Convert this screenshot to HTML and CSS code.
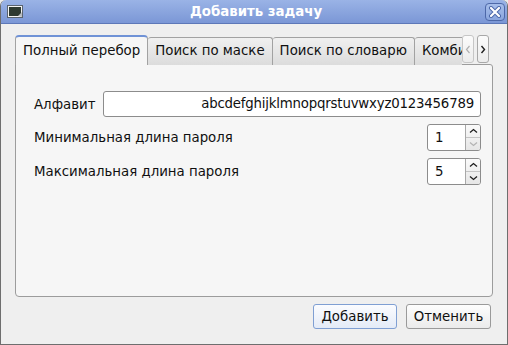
FILE: index.html
```html
<!DOCTYPE html>
<html lang="ru">
<head>
    <meta charset="UTF-8">
    <title>Добавить задачу</title>
    <link rel="stylesheet" href="styles.css">
</head>
<body>
    <div class="window">
        <div class="titlebar">
            <svg class="app-icon" width="16" height="13" viewBox="0 0 16 13">
                <rect x="0.5" y="0.5" width="15" height="12" fill="#f4f4f4" stroke="#5a6470"/>
                <rect x="2" y="2" width="12" height="9" fill="#2e3a32"/>
                <path d="M11 11 L15 7 L15 12 Z" fill="#b8bcc0"/>
            </svg>
            <div class="title">Добавить задачу</div>
            <div class="close-btn">
                <svg width="14" height="12" viewBox="0 0 14 12">
                    <path d="M3 2 L11 10 M11 2 L3 10" stroke="#4a66a8" stroke-width="4" stroke-linecap="round"/>
                    <path d="M3 2 L11 10 M11 2 L3 10" stroke="#ffffff" stroke-width="2.2" stroke-linecap="round"/>
                </svg>
            </div>
        </div>

        <div class="content">
            <div class="tabbar">
                <div class="tabs">
                    <div class="tab active">Полный перебор</div>
                    <div class="tab">Поиск по маске</div>
                    <div class="tab">Поиск по словарю</div>
                    <div class="tab">Комбинированный</div>
                </div>
                <div class="scroll-btn disabled">
                    <svg width="6" height="9" viewBox="0 0 6 9"><path d="M4.5 1 L1.5 4.5 L4.5 8" fill="none" stroke="#b0b0b0" stroke-width="1.2"/></svg>
                </div>
                <div class="scroll-btn">
                    <svg width="6" height="9" viewBox="0 0 6 9"><path d="M1.5 1 L4.5 4.5 L1.5 8" fill="none" stroke="#202020" stroke-width="1.4"/></svg>
                </div>
            </div>

            <div class="pane">
                <div class="row">
                    <span class="label">Алфавит</span>
                    <div class="line-edit">abcdefghijklmnopqrstuvwxyz0123456789</div>
                </div>
                <div class="row">
                    <span class="label">Минимальная длина пароля</span>
                    <div class="spinbox">
                        <div class="spin-value">1</div>
                        <div class="spin-buttons">
                            <div class="spin-up">
                                <svg width="9" height="6" viewBox="0 0 9 6"><path d="M1 4.5 L4.5 1.5 L8 4.5" fill="none" stroke="#202020" stroke-width="1.3"/></svg>
                            </div>
                            <div class="spin-down">
                                <svg width="9" height="6" viewBox="0 0 9 6"><path d="M1 1.5 L4.5 4.5 L8 1.5" fill="none" stroke="#b4b4b4" stroke-width="1.3"/></svg>
                            </div>
                        </div>
                    </div>
                </div>
                <div class="row">
                    <span class="label">Максимальная длина пароля</span>
                    <div class="spinbox">
                        <div class="spin-value">5</div>
                        <div class="spin-buttons">
                            <div class="spin-up">
                                <svg width="9" height="6" viewBox="0 0 9 6"><path d="M1 4.5 L4.5 1.5 L8 4.5" fill="none" stroke="#202020" stroke-width="1.3"/></svg>
                            </div>
                            <div class="spin-down">
                                <svg width="9" height="6" viewBox="0 0 9 6"><path d="M1 1.5 L4.5 4.5 L8 1.5" fill="none" stroke="#202020" stroke-width="1.3"/></svg>
                            </div>
                        </div>
                    </div>
                </div>
            </div>

            <div class="buttons">
                <button class="btn default">Добавить</button>
                <button class="btn">Отменить</button>
            </div>
        </div>
    </div>
</body>
</html>
```

FILE: styles.css
```css
* {
    margin: 0;
    padding: 0;
    box-sizing: border-box;
}

body {
    width: 508px;
    height: 345px;
    overflow: hidden;
    background: #ececec;
    font-family: 'DejaVu Sans', 'Liberation Sans', sans-serif;
    font-size: 13.33px;
    color: #101010;
}

.window {
    width: 508px;
    height: 345px;
    display: flex;
    flex-direction: column;
    background: #efefef;
    border: 1px solid #6e6e6e;
    border-top: none;
    border-radius: 6px 6px 0 0;
    overflow: hidden;
}

/* Title bar */
.titlebar {
    height: 24px;
    flex: none;
    display: flex;
    align-items: center;
    padding: 0 2px 0 6px;
    background: linear-gradient(#9ab3e6, #7b97d6);
    border-bottom: 1px solid #5d78b8;
}

.app-icon {
    flex: none;
}

.title {
    flex: 1;
    text-align: center;
    color: #ffffff;
    font-weight: bold;
    font-size: 13.33px;
    padding-left: 4px;
}

.close-btn {
    width: 20px;
    height: 18px;
    flex: none;
    display: flex;
    align-items: center;
    justify-content: center;
    border: 1px solid #4d68a8;
    border-radius: 4px;
    background: linear-gradient(#a6bdea, #8aa5dd);
}

/* Content */
.content {
    flex: 1;
    display: flex;
    flex-direction: column;
    padding: 11px 14px 15px 14px;
}

.tabbar {
    display: flex;
    align-items: flex-start;
    height: 30px;
    margin-bottom: -1px;
    position: relative;
    z-index: 1;
}

.tabs {
    width: 447px;
    height: 30px;
    display: flex;
    align-items: flex-end;
    overflow: hidden;
    flex: none;
}

.tab {
    flex: none;
    height: 28px;
    padding: 0 7px;
    line-height: 25px;
    border: 1px solid #a2a2a2;
    border-bottom: none;
    border-left: none;
    border-radius: 3px 3px 0 0;
    background: linear-gradient(#f0f0f0, #dcdcdc);
    white-space: nowrap;
}

.tab.active {
    height: 30px;
    line-height: 27px;
    border-left: 1px solid #a2a2a2;
    border-top: 2px solid #6f92d6;
    border-radius: 4px 4px 0 0;
    background: #f6f6f6;
}

.scroll-btn {
    width: 12px;
    height: 28px;
    margin-left: 3px;
    flex: none;
    display: flex;
    align-items: center;
    justify-content: center;
    border: 1px solid #a8a8a8;
    border-radius: 3px;
    background: linear-gradient(#fbfbfb, #ececec);
}

.scroll-btn.disabled {
    margin-left: 0;
    border-color: #c6c6c6;
}

.pane {
    flex: 1;
    background: #f6f6f6;
    border: 1px solid #9c9c9c;
    border-radius: 0 3px 4px 4px;
    padding: 26px 11px 0 18px;
    display: flex;
    flex-direction: column;
    gap: 7px;
}

.row {
    display: flex;
    align-items: center;
    justify-content: space-between;
}

.label {
    white-space: nowrap;
}

.line-edit {
    flex: 1;
    margin-left: 8px;
    height: 26px;
    line-height: 24px;
    text-align: right;
    padding-right: 6px;
    background: #ffffff;
    border: 1px solid #8c8c8c;
    border-radius: 3px;
    white-space: nowrap;
    overflow: hidden;
    letter-spacing: -0.2px;
}

.spinbox {
    width: 54px;
    height: 27px;
    display: flex;
    background: #ffffff;
    border: 1px solid #8c8c8c;
    border-radius: 3px;
    overflow: hidden;
}

.spin-value {
    flex: 1;
    line-height: 25px;
    padding-left: 7px;
}

.spin-buttons {
    width: 15px;
    display: flex;
    flex-direction: column;
    border-left: 1px solid #a8a8a8;
    background: linear-gradient(#fafafa, #e6e6e6);
}

.spin-up,
.spin-down {
    flex: 1;
    display: flex;
    align-items: center;
    justify-content: center;
}

.spin-up {
    border-bottom: 1px solid #c4c4c4;
}

/* Dialog buttons */
.buttons {
    display: flex;
    justify-content: flex-end;
    gap: 9px;
    margin-top: 7px;
    padding-right: 2px;
}

.btn {
    width: 85px;
    height: 25px;
    font-family: inherit;
    font-size: 13.33px;
    color: #101010;
    border: 1px solid #9a9a9a;
    border-radius: 3px;
    background: linear-gradient(#fdfdfd, #ebebeb);
}

.btn.default {
    width: 84px;
    border-color: #7f9fd3;
    background: linear-gradient(#fbfcff, #e4ebf7);
}
```
